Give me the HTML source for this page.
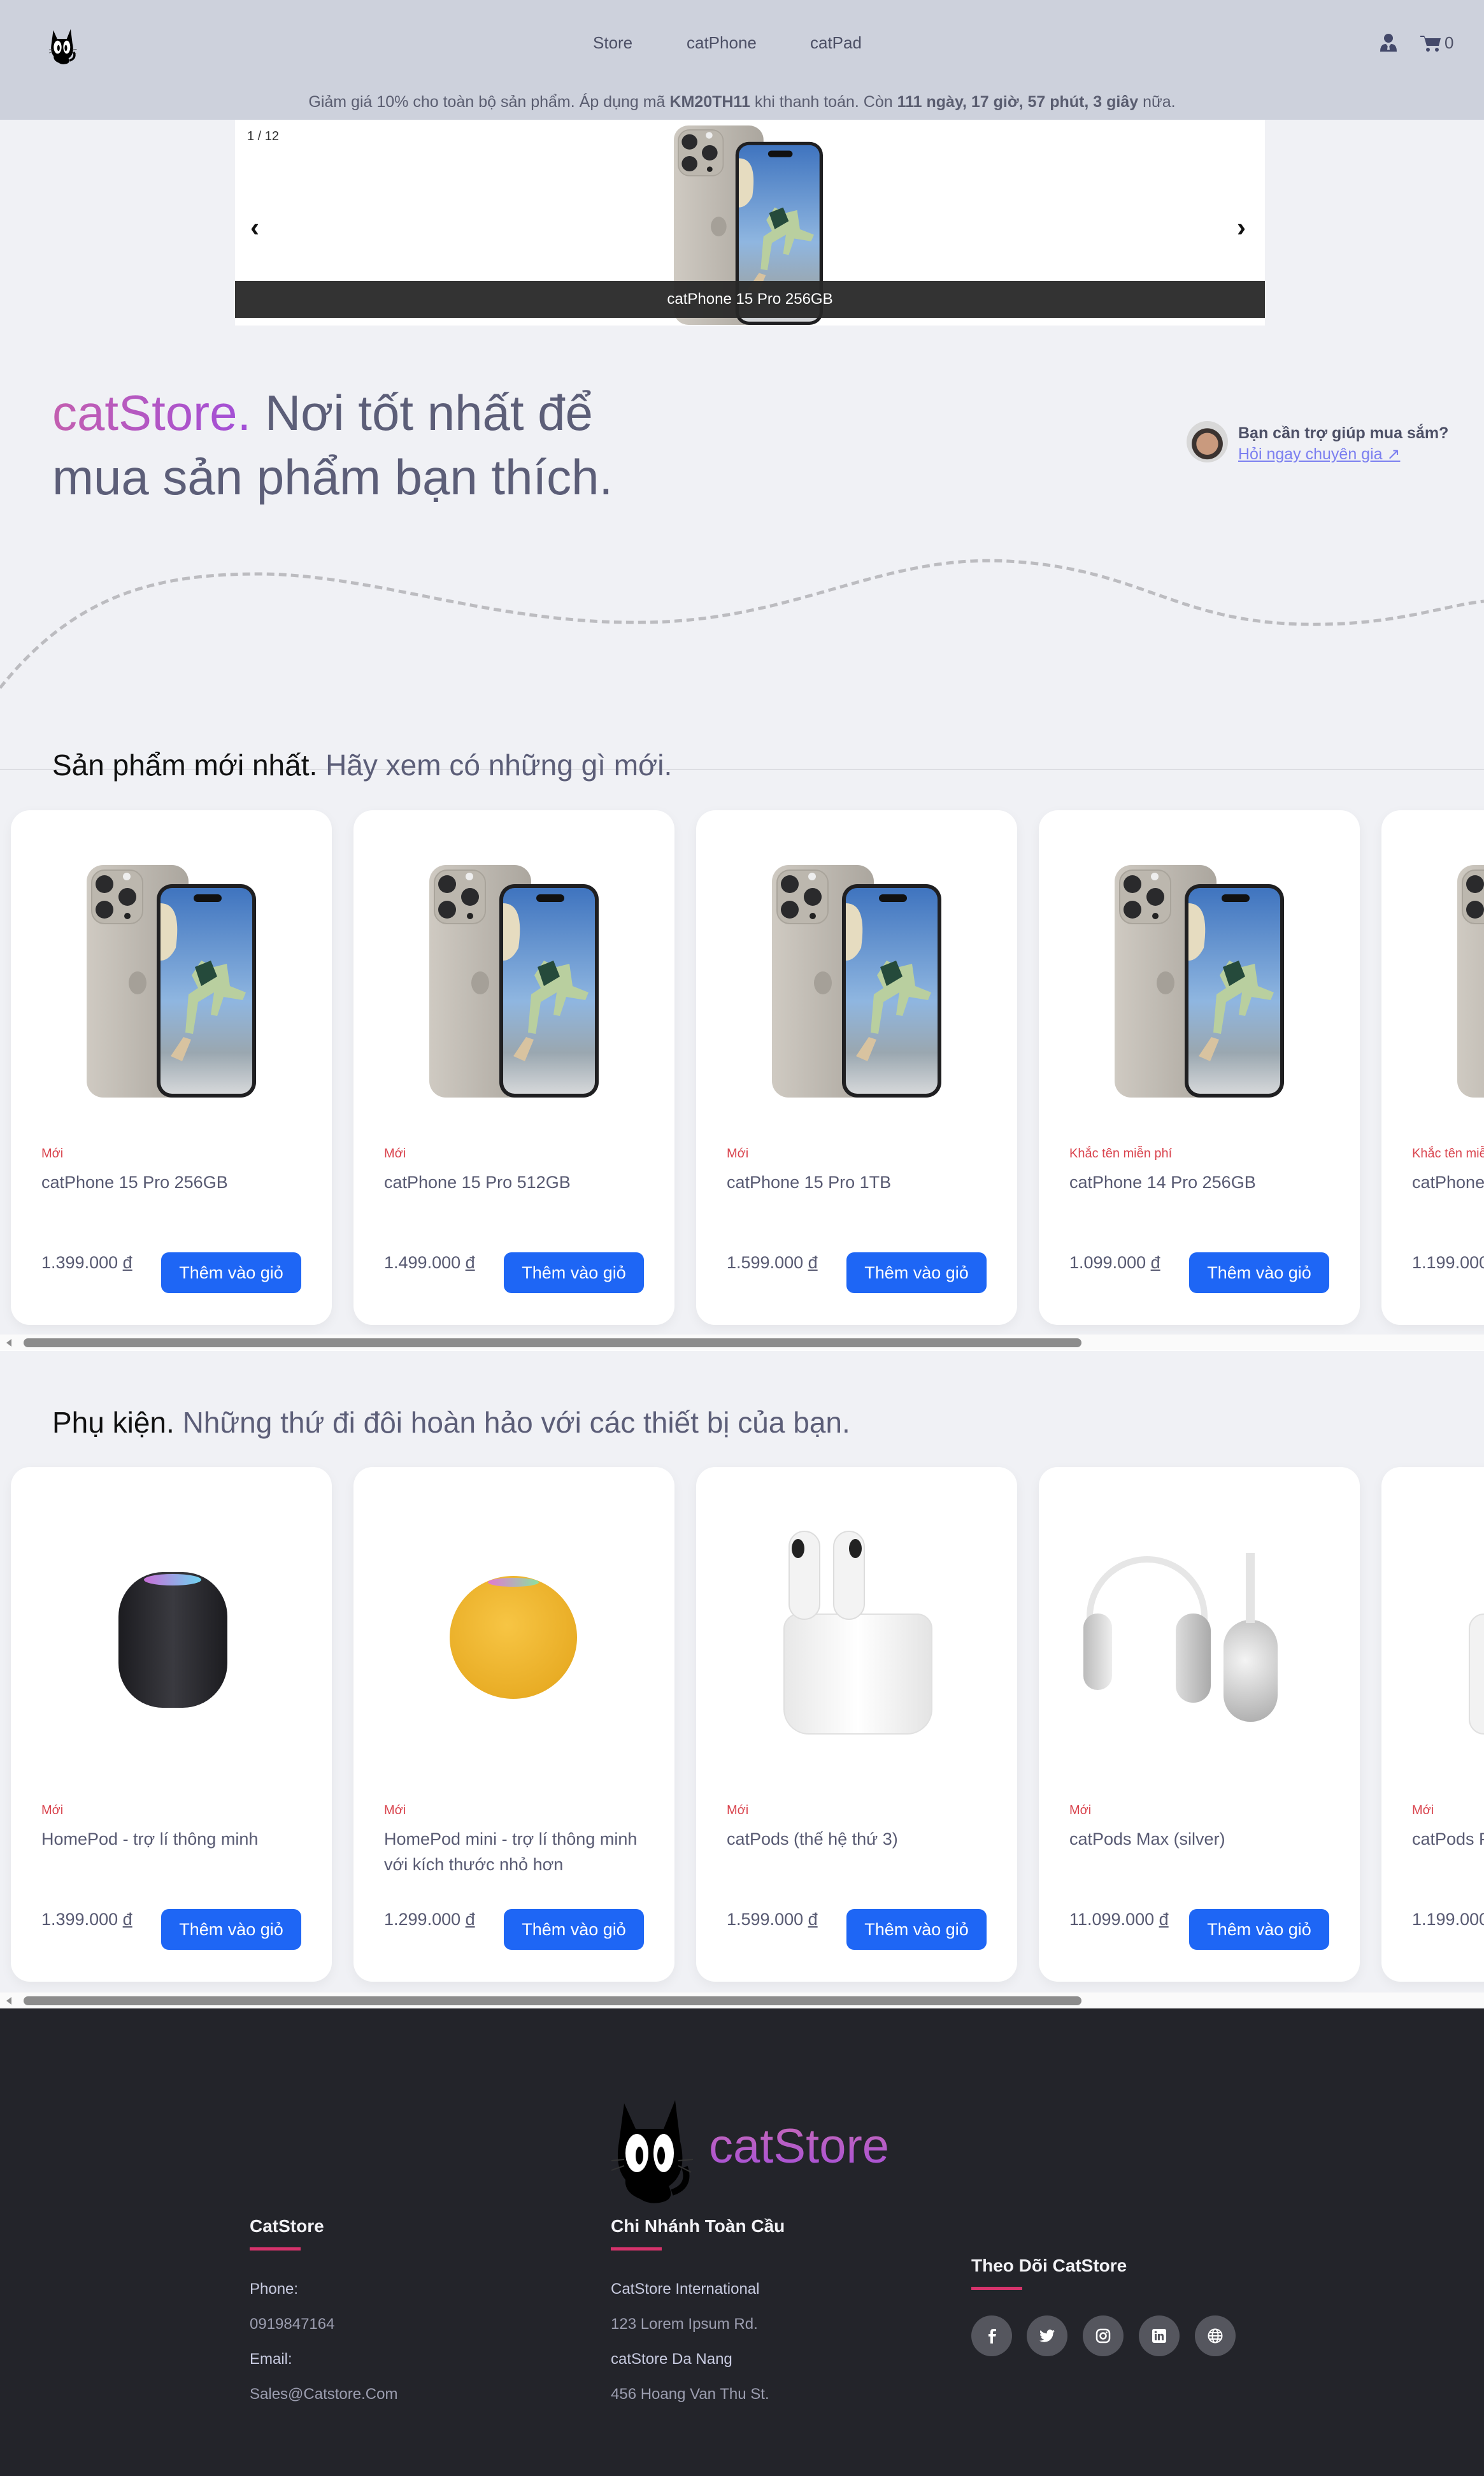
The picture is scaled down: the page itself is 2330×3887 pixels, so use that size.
<!DOCTYPE html>
<html><head><meta charset="utf-8">
<style>
*{margin:0;padding:0;box-sizing:border-box}
body{width:2330px;height:3887px;position:relative;background:#f0f1f5;font-family:"Liberation Sans","DejaVu Sans",sans-serif;color:#585a72;overflow:hidden}
.a{position:absolute}
.clip{position:absolute;left:0;top:0;width:2330px;height:3887px;overflow:hidden}
.hdr{left:0;top:0;width:2330px;height:188px;background:#cdd1dc}
.nav{top:52px;font-size:26px;color:#4d5066}
.card{position:absolute;width:504px;height:808px;background:#fff;border-radius:30px;box-shadow:0 6px 18px rgba(0,0,0,.05);overflow:hidden}
.tag{position:absolute;left:48px;top:528px;font-size:20px;color:#d9434d;white-space:nowrap}
.ttl{position:absolute;left:48px;top:564px;width:420px;font-size:27px;line-height:40px;color:#585a72}
.pr{position:absolute;left:48px;top:695px;font-size:27px;color:#585a72}
.pr u{text-decoration:underline}
.btn{position:absolute;left:236px;top:694px;width:220px;height:64px;border-radius:12px;background:#1e66f5;color:#fff;font-size:27px;text-align:center;line-height:64px}
.sb{position:absolute;left:0;width:2330px;height:25px;background:#fafafa}
.sb .t{position:absolute;left:37px;top:6px;width:1661px;height:14px;border-radius:7px;background:#8c8c8c}
.sb .l{position:absolute;left:10px;top:7px;width:0;height:0;border-top:6px solid transparent;border-bottom:6px solid transparent;border-right:8px solid #8c8c8c}
.h2{font-size:46px;color:#111;left:82px;white-space:nowrap}
.h2 span{color:#5c5e78}
.ft{background:#23242a;left:0;top:3153px;width:2330px;height:734px}
.fh{font-size:28px;font-weight:bold;color:#f2f2f6}
.ful{width:80px;height:5px;background:#d6336c}
.fi{font-size:24px}
.soc{width:64px;height:64px;border-radius:50%;background:#55565e;top:3635px}
.soc svg{position:absolute;left:20px;top:20px}
</style></head><body>
<svg width="0" height="0" style="position:absolute">
<defs>
<linearGradient id="bk" x1="0" x2="1"><stop offset="0" stop-color="#cfcac2"/><stop offset="1" stop-color="#aba69e"/></linearGradient>
<linearGradient id="sc" x1="0" y1="0" x2="0" y2="1"><stop offset="0" stop-color="#3f74bf"/><stop offset=".55" stop-color="#8fb6e0"/><stop offset=".8" stop-color="#9aa7b0"/><stop offset="1" stop-color="#d6d8da"/></linearGradient>
<symbol id="ph" viewBox="0 0 266 365">
<rect x="0" y="0" width="160" height="365" rx="26" fill="url(#bk)"/>
<rect x="8" y="8" width="80" height="84" rx="20" fill="#bcb7ae" stroke="#a9a49b" stroke-width="2"/>
<circle cx="28" cy="30" r="14" fill="#2a2a2c"/><circle cx="28" cy="70" r="14" fill="#2a2a2c"/><circle cx="64" cy="50" r="14" fill="#2a2a2c"/>
<circle cx="63" cy="18" r="6" fill="#eee"/><circle cx="64" cy="80" r="5" fill="#222"/>
<ellipse cx="80" cy="185" rx="14" ry="18" fill="#a5a098"/>
<rect x="110" y="30" width="156" height="335" rx="24" fill="#1f1f21"/>
<rect x="116" y="36" width="144" height="323" rx="18" fill="url(#sc)"/>
<path d="M116 60 Q150 60 140 130 Q130 150 116 150Z" fill="#e6dcc0"/>
<rect x="168" y="46" width="44" height="12" rx="6" fill="#111"/>
<path d="M180 150 l20 10 l20 -5 l5 35 l25 10 l-5 12 l-30 -5 l-10 30 l-10 -2 l5 -35 l-25 15 l-8 50 l-12 -2 l5 -60 l15 -10 l-10 -20z" fill="#b9cf9f"/>
<path d="M170 160 l25 -10 l10 25 l-25 15z" fill="#254a3b"/>
<path d="M132 300 l20 -30 l12 4 l-14 34z" fill="#d8c3a0"/>
</symbol>
<symbol id="cat" viewBox="0 0 130 170">
<path d="M20 10 L38 50 L82 50 L100 5 L108 70 Q120 120 90 140 Q100 160 80 165 Q60 170 45 160 Q20 150 22 130 Q5 110 12 70Z" fill="#000"/>
<ellipse cx="40" cy="88" rx="18" ry="30" fill="#fff"/><ellipse cx="82" cy="88" rx="16" ry="30" fill="#fff"/>
<ellipse cx="44" cy="92" rx="6" ry="14" fill="#000"/><ellipse cx="78" cy="92" rx="6" ry="14" fill="#000"/>
<path d="M95 150 Q125 140 115 110" stroke="#000" stroke-width="10" fill="none"/>
<path d="M0 100 L20 98 M0 115 L20 108 M105 100 L128 98 M105 108 L125 118" stroke="#333" stroke-width="2"/>
</symbol>
</defs></svg>

<div class="a hdr"></div>
<svg class="a" style="left:72px;top:44px" width="54" height="58" viewBox="0 0 130 170"><use href="#cat"/></svg>
<div class="a nav" style="left:931px">Store</div>
<div class="a nav" style="left:1078px">catPhone</div>
<div class="a nav" style="left:1272px">catPad</div>
<svg class="a" style="left:2167px;top:52px" width="26" height="29" viewBox="0 0 26 29"><circle cx="13" cy="8" r="7" fill="#44496a"/><path d="M0 29 Q0 17 9 17 L13 22 L17 17 Q26 17 26 29Z" fill="#44496a"/><path d="M12 18 h2 l1 8 h-4z" fill="#cdd1dc"/></svg>
<svg class="a" style="left:2230px;top:54px" width="32" height="28" viewBox="0 0 32 28"><path d="M0 2 h6 l2 4 h24 l-3 12 h-19 l-4 -14 h-6z" fill="#44496a"/><circle cx="12" cy="24" r="3" fill="#44496a"/><circle cx="26" cy="24" r="3" fill="#44496a"/></svg>
<div class="a" style="left:2268px;top:52px;font-size:26px;color:#4d5066">0</div>
<div class="a" style="left:0;width:2330px;top:146px;text-align:center;font-size:25px;color:#5a5d70">Giảm giá 10% cho toàn bộ sản phẩm. Áp dụng mã <b>KM20TH11</b> khi thanh toán. Còn <b>111 ngày, 17 giờ, 57 phút, 3 giây</b> nữa.</div>

<div class="a" style="left:369px;top:188px;width:1617px;height:323px;background:#fff"></div>
<svg class="a" style="left:1058px;top:197px" width="234" height="313" viewBox="0 0 266 365" preserveAspectRatio="none"><use href="#ph"/></svg>
<div class="a" style="left:369px;top:441px;width:1617px;height:58px;background:rgba(40,40,40,.95);color:#fff;font-size:24px;text-align:center;line-height:58px">catPhone 15 Pro 256GB</div>
<div class="a" style="left:388px;top:203px;font-size:20px;color:#333">1 / 12</div>
<div class="a" style="left:393px;top:333px;font-size:42px;font-weight:bold;color:#111">‹</div>
<div class="a" style="left:1942px;top:333px;font-size:42px;font-weight:bold;color:#111">›</div>

<div class="a" style="left:82px;top:598px;font-size:78px;line-height:101px;color:#5c5e78;white-space:nowrap"><span style="background:linear-gradient(90deg,#c35fb0,#a24fd8);-webkit-background-clip:text;color:transparent">catStore.</span> Nơi tốt nhất để<br>mua sản phẩm bạn thích.</div>

<div class="a" style="left:1863px;top:661px;width:65px;height:65px;border-radius:50%;background:radial-gradient(circle at 50% 55%,#c99a7e 0 35%,#3b3330 36% 50%,#d8d8d8 51%)"></div>
<div class="a" style="left:1944px;top:666px;font-size:25px;font-weight:bold;color:#4d5066">Bạn cần trợ giúp mua sắm?</div>
<div class="a" style="left:1944px;top:698px;font-size:25px;color:#7b7ff0;text-decoration:underline">Hỏi ngay chuyên gia ↗</div>

<svg class="a" style="left:0;top:860px" width="2330" height="240" viewBox="0 860 2330 240"><path d="M0 1080 C120 930 250 900 416 901 C600 905 780 980 1010 977 C1250 975 1380 870 1583 881 C1800 893 1850 985 2080 980 C2200 978 2270 950 2330 944" stroke="#bcbcc0" stroke-width="5" stroke-dasharray="12 7" fill="none"/></svg>

<div class="a" style="left:0;top:1207px;width:2330px;height:2px;background:#dcdde2"></div>
<div class="a h2" style="top:1174px">Sản phẩm mới nhất. <span>Hãy xem có những gì mới.</span></div>

<div class="clip">
<div class="card" style="left:17px;top:1272px"><svg class="a" style="left:119px;top:86px" width="266" height="365"><use href="#ph"/></svg><div class="tag">Mới</div><div class="ttl">catPhone 15 Pro 256GB</div><div class="pr">1.399.000 <u>đ</u></div><div class="btn">Thêm vào giỏ</div></div>
<div class="card" style="left:555px;top:1272px"><svg class="a" style="left:119px;top:86px" width="266" height="365"><use href="#ph"/></svg><div class="tag">Mới</div><div class="ttl">catPhone 15 Pro 512GB</div><div class="pr">1.499.000 <u>đ</u></div><div class="btn">Thêm vào giỏ</div></div>
<div class="card" style="left:1093px;top:1272px"><svg class="a" style="left:119px;top:86px" width="266" height="365"><use href="#ph"/></svg><div class="tag">Mới</div><div class="ttl">catPhone 15 Pro 1TB</div><div class="pr">1.599.000 <u>đ</u></div><div class="btn">Thêm vào giỏ</div></div>
<div class="card" style="left:1631px;top:1272px"><svg class="a" style="left:119px;top:86px" width="266" height="365"><use href="#ph"/></svg><div class="tag">Khắc tên miễn phí</div><div class="ttl">catPhone 14 Pro 256GB</div><div class="pr">1.099.000 <u>đ</u></div><div class="btn">Thêm vào giỏ</div></div>
<div class="card" style="left:2169px;top:1272px"><svg class="a" style="left:119px;top:86px" width="266" height="365"><use href="#ph"/></svg><div class="tag">Khắc tên miễn phí</div><div class="ttl">catPhone 14 Pro 512GB</div><div class="pr">1.199.000 <u>đ</u></div></div>

<div class="card" style="left:17px;top:2303px">
<div class="a" style="left:169px;top:165px;width:171px;height:213px;border-radius:70px;background:linear-gradient(90deg,#1c1c20,#3a3a40 50%,#1c1c20)"></div>
<div class="a" style="left:209px;top:168px;width:90px;height:18px;border-radius:50%;background:linear-gradient(90deg,#c86fd8,#6fd3f0)"></div>
<div class="tag">Mới</div><div class="ttl">HomePod - trợ lí thông minh</div><div class="pr">1.399.000 <u>đ</u></div><div class="btn">Thêm vào giỏ</div></div>
<div class="card" style="left:555px;top:2303px">
<div class="a" style="left:151px;top:171px;width:200px;height:193px;border-radius:50%;background:radial-gradient(circle at 45% 40%,#f7c544,#e3a319)"></div>
<div class="a" style="left:211px;top:174px;width:80px;height:14px;border-radius:50%;background:linear-gradient(90deg,#e07ad0,#8de0a0)"></div>
<div class="tag">Mới</div><div class="ttl">HomePod mini - trợ lí thông minh với kích thước nhỏ hơn</div><div class="pr">1.299.000 <u>đ</u></div><div class="btn">Thêm vào giỏ</div></div>
<div class="card" style="left:1093px;top:2303px">
<div class="a" style="left:137px;top:230px;width:234px;height:190px;border-radius:24px 24px 40px 40px;background:linear-gradient(90deg,#e8e8e8,#fff 50%,#e4e4e4);border:2px solid #e0e0e0"></div>
<div class="a" style="left:145px;top:100px;width:50px;height:140px;border-radius:25px;background:#f3f3f3;border:2px solid #ddd"></div>
<div class="a" style="left:215px;top:100px;width:50px;height:140px;border-radius:25px;background:#f3f3f3;border:2px solid #ddd"></div>
<div class="a" style="left:150px;top:113px;width:20px;height:30px;border-radius:50%;background:#222"></div>
<div class="a" style="left:240px;top:113px;width:20px;height:30px;border-radius:50%;background:#222"></div>
<div class="tag">Mới</div><div class="ttl">catPods (thế hệ thứ 3)</div><div class="pr">1.599.000 <u>đ</u></div><div class="btn">Thêm vào giỏ</div></div>
<div class="card" style="left:1631px;top:2303px">
<div class="a" style="left:75px;top:140px;width:190px;height:200px;border-radius:95px 95px 0 0;border:10px solid #e6e6e6;border-bottom:none"></div>
<div class="a" style="left:70px;top:230px;width:45px;height:120px;border-radius:22px;background:linear-gradient(90deg,#bbb,#eee)"></div>
<div class="a" style="left:215px;top:230px;width:55px;height:140px;border-radius:27px;background:linear-gradient(90deg,#ddd,#aaa)"></div>
<div class="a" style="left:290px;top:240px;width:85px;height:160px;border-radius:42px;background:radial-gradient(circle at 40% 40%,#f4f4f4,#a8a8a8)"></div>
<div class="a" style="left:325px;top:135px;width:14px;height:110px;background:#e4e4e4"></div>
<div class="tag">Mới</div><div class="ttl">catPods Max (silver)</div><div class="pr">11.099.000 <u>đ</u></div><div class="btn">Thêm vào giỏ</div></div>
<div class="card" style="left:2169px;top:2303px">
<div class="a" style="left:137px;top:230px;width:234px;height:190px;border-radius:24px;background:#f2f2f2;border:2px solid #e0e0e0"></div>
<div class="tag">Mới</div><div class="ttl">catPods Pro</div><div class="pr">1.199.000 <u>đ</u></div></div>
</div>

<div class="sb" style="top:2095px"><div class="l"></div><div class="t"></div></div>
<div class="a" style="left:0;top:2120px;width:2330px;height:1px;background:#fff"></div>

<div class="a h2" style="top:2206px">Phụ kiện. <span>Những thứ đi đôi hoàn hảo với các thiết bị của bạn.</span></div>
<div class="sb" style="top:3128px"><div class="l"></div><div class="t"></div></div>

<div class="a ft"></div>
<svg class="a" style="left:955px;top:3292px" width="140" height="170" viewBox="0 0 130 170"><use href="#cat"/></svg>
<div class="a" style="left:1113px;top:3326px;font-size:76px;background:linear-gradient(180deg,#c86ab6,#a44fd9);-webkit-background-clip:text;color:transparent">catStore</div>

<div class="a fh" style="left:392px;top:3479px">CatStore</div>
<div class="a ful" style="left:392px;top:3528px"></div>
<div class="a fi" style="left:392px;top:3580px;color:#c8cbe0">Phone:</div>
<div class="a fi" style="left:392px;top:3635px;color:#9c9eb0">0919847164</div>
<div class="a fi" style="left:392px;top:3690px;color:#c8cbe0">Email:</div>
<div class="a fi" style="left:392px;top:3745px;color:#9c9eb0">Sales@Catstore.Com</div>

<div class="a fh" style="left:959px;top:3479px">Chi Nhánh Toàn Cầu</div>
<div class="a ful" style="left:959px;top:3528px"></div>
<div class="a fi" style="left:959px;top:3580px;color:#c8cbe0">CatStore International</div>
<div class="a fi" style="left:959px;top:3635px;color:#9c9eb0">123 Lorem Ipsum Rd.</div>
<div class="a fi" style="left:959px;top:3690px;color:#c8cbe0">catStore Da Nang</div>
<div class="a fi" style="left:959px;top:3745px;color:#9c9eb0">456 Hoang Van Thu St.</div>

<div class="a fh" style="left:1525px;top:3541px">Theo Dõi CatStore</div>
<div class="a ful" style="left:1525px;top:3590px"></div>
<div class="a soc" style="left:1525px"><svg width="24" height="24" viewBox="0 0 24 24"><path d="M14 24V13h4l1-4h-5V6.5c0-1 .5-2 2-2h3V1h-4c-3.5 0-5 2-5 5v3H7v4h3v11z" fill="#fff"/></svg></div>
<div class="a soc" style="left:1612px"><svg width="24" height="24" viewBox="0 0 24 24"><path d="M24 4.5c-.9.4-1.8.7-2.8.8 1-.6 1.8-1.6 2.1-2.7-1 .6-2 1-3.1 1.2A4.9 4.9 0 0 0 11.8 8.3 14 14 0 0 1 1.7 3.1a4.9 4.9 0 0 0 1.5 6.600c-.8 0-1.600-.3-2.2-.6 0 2.4 1.7 4.4 3.9 4.8-.7.2-1.5.2-2.2.1.6 2 2.4 3.4 4.6 3.4A9.9 9.9 0 0 1 0 19.5 14 14 0 0 0 7.5 21.7c9.1 0 14-7.5 14-14v-.6c1-.7 1.8-1.6 2.5-2.6z" fill="#fff"/></svg></div>
<div class="a soc" style="left:1700px"><svg width="24" height="24" viewBox="0 0 24 24"><rect x="2" y="2" width="20" height="20" rx="6" stroke="#fff" stroke-width="2.5" fill="none"/><circle cx="12" cy="12" r="4.5" stroke="#fff" stroke-width="2.5" fill="none"/><circle cx="17.5" cy="6.5" r="1.3" fill="#fff"/></svg></div>
<div class="a soc" style="left:1788px"><svg width="24" height="24" viewBox="0 0 24 24"><rect x="1" y="1" width="22" height="22" rx="3" fill="#fff"/><rect x="5" y="9" width="3" height="10" fill="#55565e"/><circle cx="6.5" cy="6" r="1.8" fill="#55565e"/><path d="M10 9h3v1.5c.6-1 1.6-1.7 3-1.700 2.3 0 3 1.4 3 3.7V19h-3v-6c0-1-.4-1.8-1.5-1.8S13 12 13 13v6h-3z" fill="#55565e"/></svg></div>
<div class="a soc" style="left:1876px"><svg width="24" height="24" viewBox="0 0 24 24"><circle cx="12" cy="12" r="10.5" stroke="#fff" stroke-width="2" fill="none"/><ellipse cx="12" cy="12" rx="4.5" ry="10.5" stroke="#fff" stroke-width="2" fill="none"/><path d="M1.5 12h21M3 7h18M3 17h18" stroke="#fff" stroke-width="2"/></svg></div>
</body></html>
